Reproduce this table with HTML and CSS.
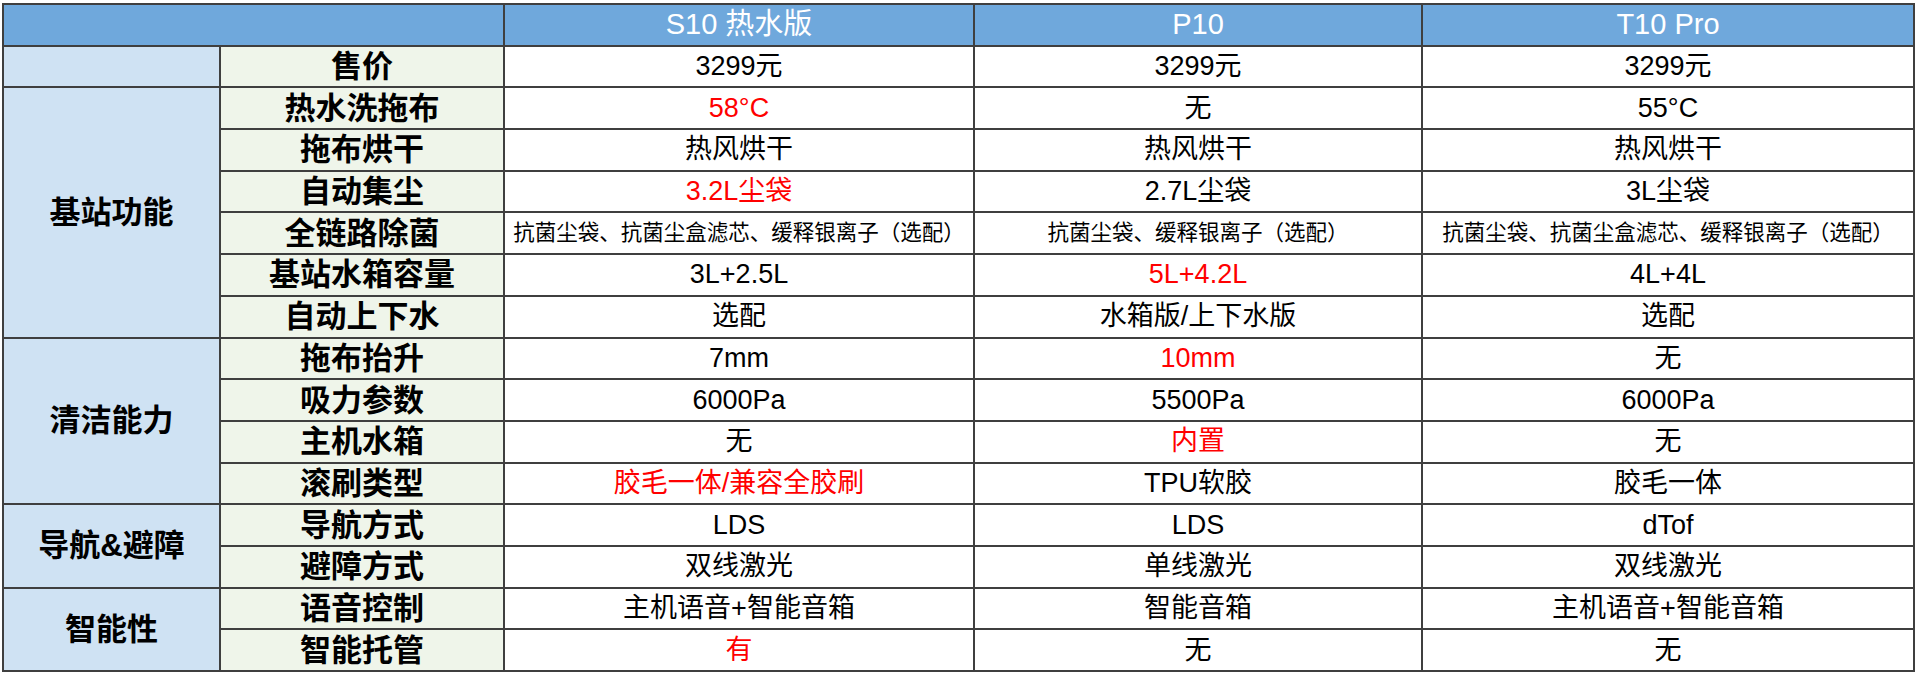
FILE: index.html
```html
<!DOCTYPE html>
<html lang="zh-CN">
<head>
<meta charset="utf-8">
<title>扫地机器人对比</title>
<link rel="stylesheet" href="styles.css">
</head>
<body>
<div class="sheet">
  <div class="cell head span2"></div>
  <div class="cell head">S10 热水版</div>
  <div class="cell head">P10</div>
  <div class="cell head">T10 Pro</div>

  <div class="cell group"></div>
  <div class="cell label">售价</div>
  <div class="cell">3299元</div>
  <div class="cell">3299元</div>
  <div class="cell">3299元</div>

  <div class="cell group rows6">基站功能</div>
  <div class="cell label">热水洗拖布</div>
  <div class="cell red">58°C</div>
  <div class="cell">无</div>
  <div class="cell">55°C</div>

  <div class="cell label">拖布烘干</div>
  <div class="cell">热风烘干</div>
  <div class="cell">热风烘干</div>
  <div class="cell">热风烘干</div>

  <div class="cell label">自动集尘</div>
  <div class="cell red">3.2L尘袋</div>
  <div class="cell">2.7L尘袋</div>
  <div class="cell">3L尘袋</div>

  <div class="cell label">全链路除菌</div>
  <div class="cell small">抗菌尘袋、抗菌尘盒滤芯、缓释银离子（选配）</div>
  <div class="cell small">抗菌尘袋、缓释银离子（选配）</div>
  <div class="cell small">抗菌尘袋、抗菌尘盒滤芯、缓释银离子（选配）</div>

  <div class="cell label">基站水箱容量</div>
  <div class="cell">3L+2.5L</div>
  <div class="cell red">5L+4.2L</div>
  <div class="cell">4L+4L</div>

  <div class="cell label">自动上下水</div>
  <div class="cell">选配</div>
  <div class="cell">水箱版/上下水版</div>
  <div class="cell">选配</div>

  <div class="cell group rows4">清洁能力</div>
  <div class="cell label">拖布抬升</div>
  <div class="cell">7mm</div>
  <div class="cell red">10mm</div>
  <div class="cell">无</div>

  <div class="cell label">吸力参数</div>
  <div class="cell">6000Pa</div>
  <div class="cell">5500Pa</div>
  <div class="cell">6000Pa</div>

  <div class="cell label">主机水箱</div>
  <div class="cell">无</div>
  <div class="cell red">内置</div>
  <div class="cell">无</div>

  <div class="cell label">滚刷类型</div>
  <div class="cell red">胶毛一体/兼容全胶刷</div>
  <div class="cell">TPU软胶</div>
  <div class="cell">胶毛一体</div>

  <div class="cell group rows2">导航&amp;避障</div>
  <div class="cell label">导航方式</div>
  <div class="cell">LDS</div>
  <div class="cell">LDS</div>
  <div class="cell">dTof</div>

  <div class="cell label">避障方式</div>
  <div class="cell">双线激光</div>
  <div class="cell">单线激光</div>
  <div class="cell">双线激光</div>

  <div class="cell group rows2">智能性</div>
  <div class="cell label">语音控制</div>
  <div class="cell">主机语音+智能音箱</div>
  <div class="cell">智能音箱</div>
  <div class="cell">主机语音+智能音箱</div>

  <div class="cell label">智能托管</div>
  <div class="cell red">有</div>
  <div class="cell">无</div>
  <div class="cell">无</div>
</div>
</body>
</html>
```

FILE: styles.css
```css
html, body {
  margin: 0;
  padding: 0;
  background: #ffffff;
}

body {
  font-family: "Liberation Sans", "Noto Sans CJK SC", sans-serif;
  overflow: hidden;
}

.sheet {
  display: grid;
  grid-template-columns: 215px 282px 468px 446px 490px;
  grid-template-rows: repeat(16, minmax(0, 1fr));
  gap: 2px;
  padding: 2px;
  box-sizing: border-box;
  width: max-content;
  height: 669px;
  margin: 3px 0 0 2px;
  background: #3f3f3f;
}

.cell {
  display: flex;
  align-items: center;
  justify-content: center;
  background: #ffffff;
  color: #000000;
  font-size: 27px;
  line-height: 1;
  white-space: nowrap;
  overflow: hidden;
}

.head {
  background: #6fa8dc;
  color: #ffffff;
  font-size: 29px;
}

.span2 {
  grid-column: span 2;
}

.group {
  background: #cfe2f3;
  font-weight: 700;
  font-size: 31px;
}

.rows6 { grid-row: span 6; }
.rows4 { grid-row: span 4; }
.rows2 { grid-row: span 2; }

.label {
  background: #eff5ea;
  font-weight: 700;
  font-size: 31px;
}

.red {
  color: #ff0000;
}

.small {
  font-size: 21.5px;
}
```
